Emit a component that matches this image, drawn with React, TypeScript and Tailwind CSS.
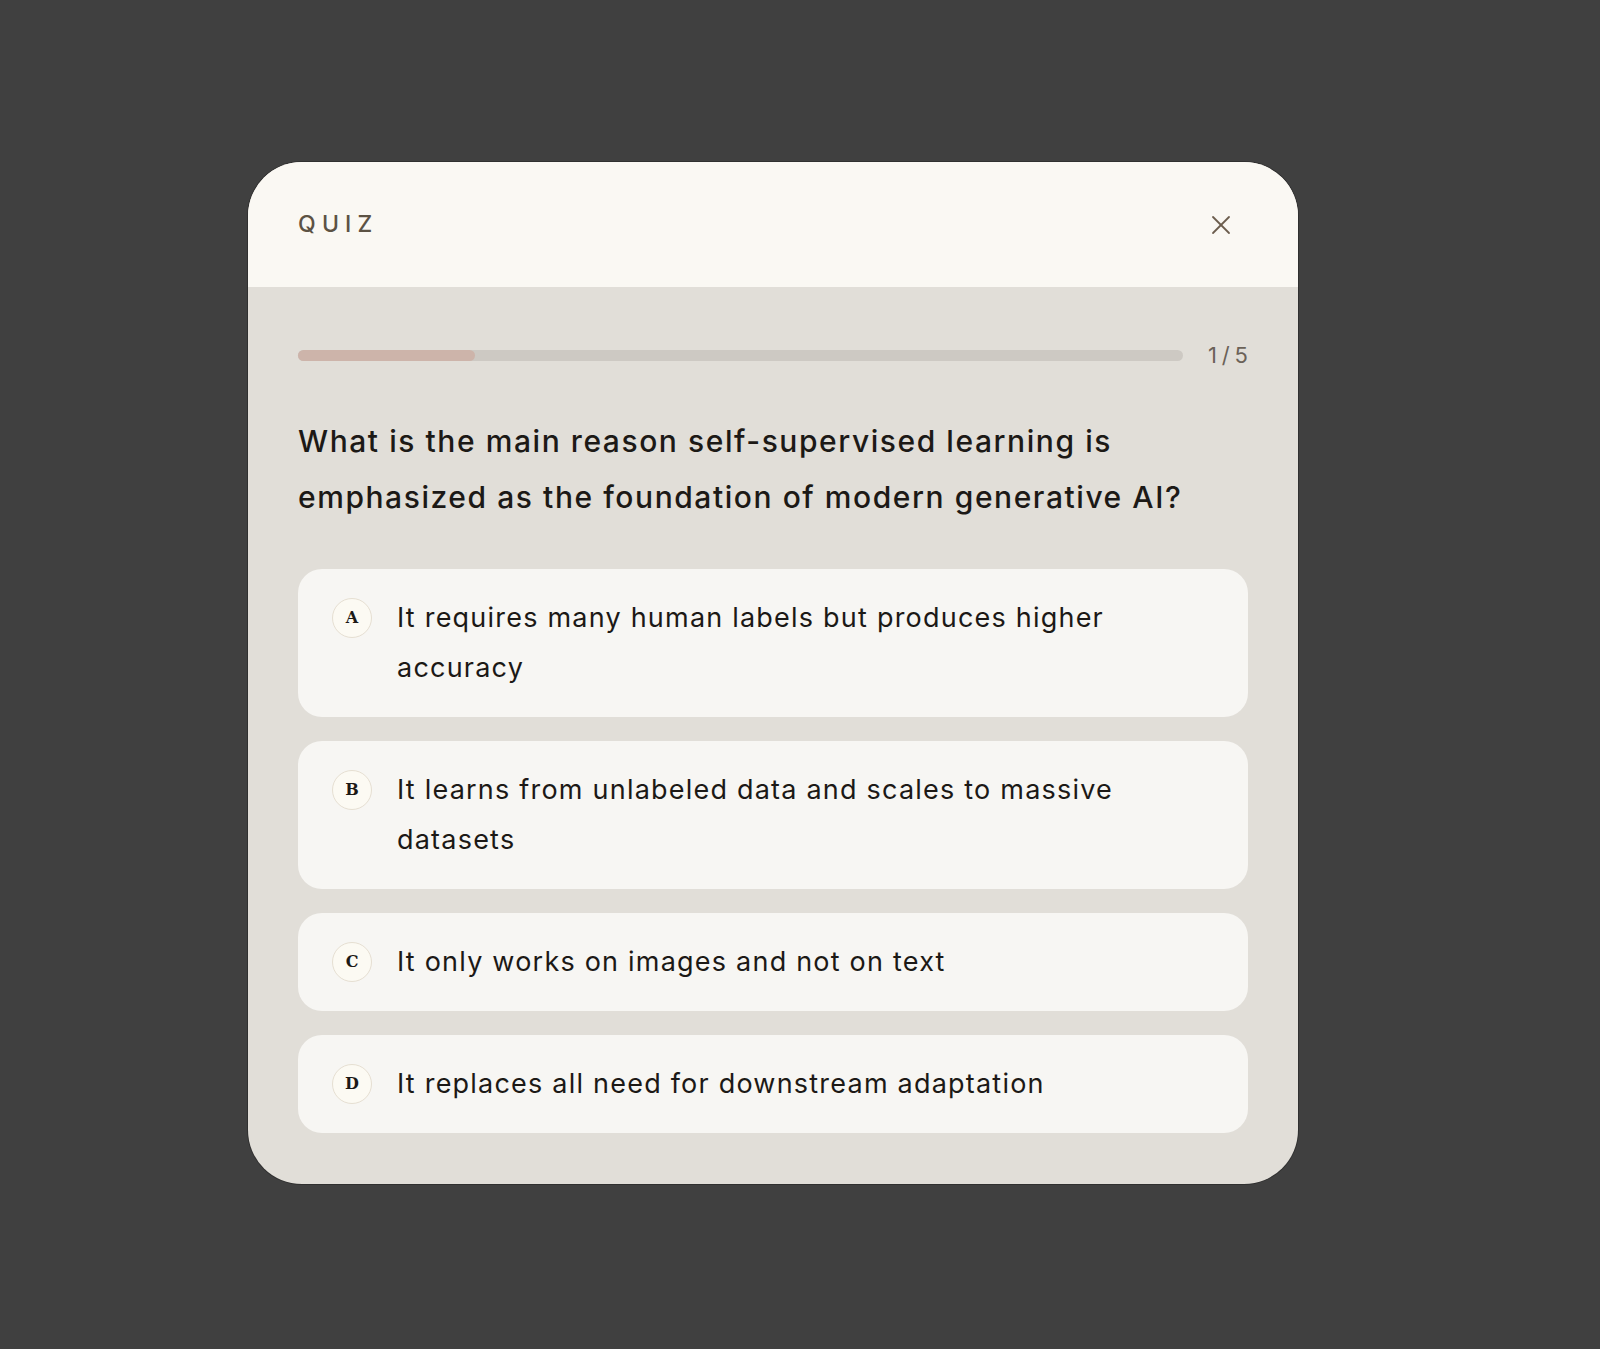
import { useState } from "react";

const options = [
  { key: "A", text: "It requires many human labels but produces higher accuracy" },
  { key: "B", text: "It learns from unlabeled data and scales to massive datasets" },
  { key: "C", text: "It only works on images and not on text" },
  { key: "D", text: "It replaces all need for downstream adaptation" },
];

export default function App() {
  const [selected, setSelected] = useState<string | null>(null);
  const current = 1;
  const total = 5;

  return (
    <div className="min-h-[1349px] w-full bg-[#404040] pl-[248px] pt-[162px] font-['Inter','Noto_Sans',sans-serif]">
      {/* Quiz modal */}
      <div className="w-[1050px] overflow-hidden rounded-[54px] bg-[#e1ded8] shadow-[0_0_0_1px_rgba(0,0,0,0.25)]">
        {/* Header */}
        <div className="flex h-[125px] items-center justify-between bg-[#faf8f3] pl-[50px] pr-[67px]">
          <span className="text-[23px] font-medium tracking-[0.27em] text-[#5c5244]">QUIZ</span>
          <button className="flex h-5 w-5 items-center justify-center text-[#6b5c4c]">
            <svg width="20" height="20" viewBox="0 0 20 20" fill="none" stroke="currentColor" strokeWidth="1.8" strokeLinecap="round">
              <path d="M2 2 L18 18" />
              <path d="M18 2 L2 18" />
            </svg>
          </button>
        </div>

        {/* Body */}
        <div className="px-[50px] pb-[51px] pt-[50px]">
          <div className="flex h-9 items-center gap-[25px]">
            <div className="h-[11px] flex-1 rounded-full bg-[#cdc9c3]">
              <div
                className="h-full rounded-full bg-[#cdb4aa]"
                style={{ width: `${(current / total) * 100}%` }}
              />
            </div>
            <span className="-mr-[0.22em] text-[22px] tracking-[0.22em] text-[#6b6258]">
              {current}/{total}
            </span>
          </div>

          <h2 className="mt-10 text-[30px] font-medium leading-[56px] tracking-[0.052em] text-[#1c1916]">
            What is the main reason self-supervised learning is emphasized as the foundation of modern generative AI?
          </h2>

          <ul className="mt-[44px] flex flex-col gap-6">
            {options.map((o) => (
              <li key={o.key}>
                <button
                  onClick={() => setSelected(o.key)}
                  className={`flex w-full items-start gap-[25px] rounded-3xl py-6 pl-[34px] pr-8 text-left ${
                    selected === o.key ? "bg-white" : "bg-[#f7f6f3]"
                  }`}
                >
                  <span className="mt-[5px] flex h-10 w-10 shrink-0 items-center justify-center rounded-full border border-[#e6dfd2] bg-[#fcfaf3] font-['DejaVu_Serif',serif] text-[16px] font-bold text-[#1c1916]">
                    {o.key}
                  </span>
                  <span className="max-w-[780px] text-[27px] leading-[50px] tracking-[0.045em] text-[#1c1916]">{o.text}</span>
                </button>
              </li>
            ))}
          </ul>
        </div>
      </div>
    </div>
  );
}
